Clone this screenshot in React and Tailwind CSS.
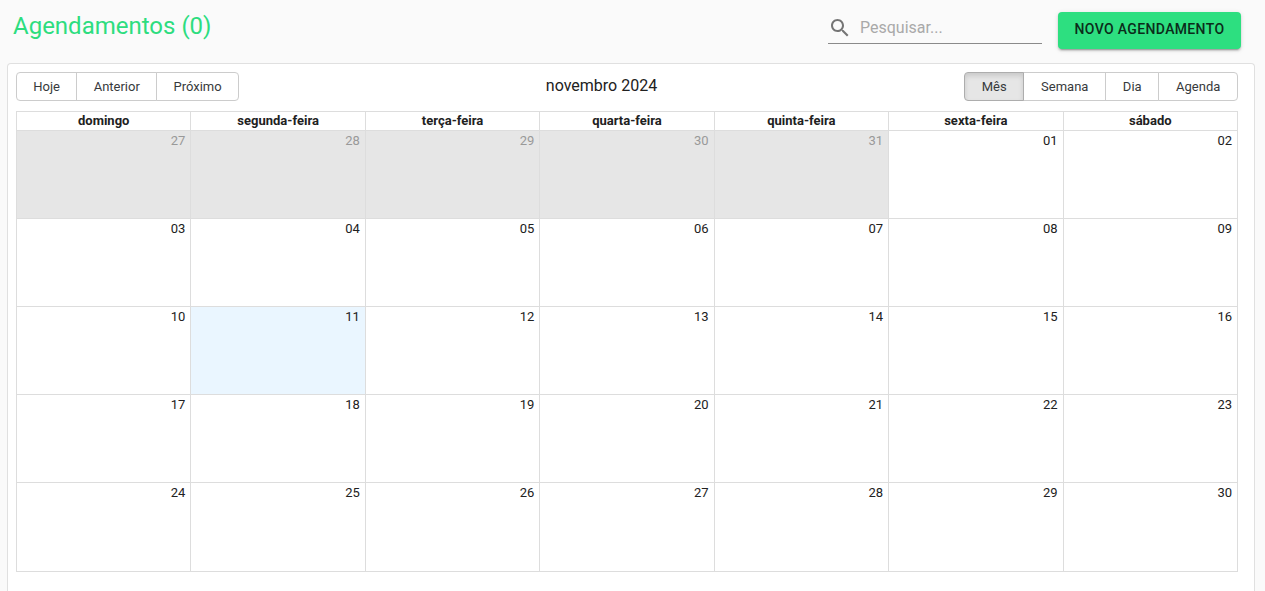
import React, { useState } from "react";

const WEEKDAYS = [
  "domingo",
  "segunda-feira",
  "terça-feira",
  "quarta-feira",
  "quinta-feira",
  "sexta-feira",
  "sábado",
];

const FIRST_DAY = new Date(2024, 9, 27);
const WEEKS = Array.from({ length: 5 }, (_, week) =>
  Array.from({ length: 7 }, (_, day) => {
    const date = new Date(FIRST_DAY);
    date.setDate(FIRST_DAY.getDate() + week * 7 + day);
    return {
      label: String(date.getDate()).padStart(2, "0"),
      offRange: date.getMonth() !== 10,
      today: date.getMonth() === 10 && date.getDate() === 11,
    };
  })
);

const VIEWS = ["Mês", "Semana", "Dia", "Agenda"];

function ToolbarButton({ active, children, ...props }) {
  return (
    <button
      type="button"
      className={
        "-ml-px h-[29px] flex-auto border px-4 text-[13px] leading-4 text-[#373a3c] first:ml-0 first:rounded-l last:rounded-r " +
        (active
          ? "z-10 border-[#adadad] bg-[#e6e6e6] shadow-[inset_0_3px_5px_rgba(0,0,0,0.125)]"
          : "border-[#cccccc] bg-white hover:bg-[#e6e6e6]")
      }
      {...props}
    >
      {children}
    </button>
  );
}

function dayClass(day) {
  if (day.offRange) return "bg-[#e6e6e6] text-[#999999]";
  if (day.today) return "bg-[#eaf6ff]";
  return "";
}

export default function App() {
  const [view, setView] = useState("Mês");

  return (
    <div className="flex min-h-screen flex-col bg-[#fafafa] pr-[10px] pl-[7px] font-['Roboto',sans-serif] text-[#212121]">
      <header className="flex items-start justify-between pt-3 pr-[14px] pb-[13px] pl-[6px]">
        <h1 className="text-2xl leading-7 text-[#2ddd7f]">Agendamentos (0)</h1>
        <div className="flex items-start gap-4">
          <label className="flex h-8 w-[214px] items-center gap-2 border-b border-[#8a8a8a]">
            <svg
              className="size-6 shrink-0 fill-[#757575]"
              viewBox="0 0 24 24"
              aria-hidden="true"
            >
              <path d="M15.5 14h-.79l-.28-.27C15.41 12.59 16 11.11 16 9.5 16 5.91 13.09 3 9.5 3S3 5.91 3 9.5 5.91 16 9.5 16c1.61 0 3.09-.59 4.23-1.57l.27.28v.79l5 4.99L20.49 19l-4.99-5zm-6 0C7.01 14 5 11.99 5 9.5S7.01 5 9.5 5 14 7.01 14 9.5 11.99 14 9.5 14z" />
            </svg>
            <input
              type="search"
              aria-label="Pesquisar"
              placeholder="Pesquisar..."
              className="w-full min-w-0 bg-transparent text-base leading-5 outline-none placeholder:text-[#a9a9a9]"
            />
          </label>
          <button
            type="button"
            className="min-w-[183px] rounded bg-[#2ddf80] px-4 pt-[5px] pb-2 text-sm leading-6 font-medium tracking-wide text-[#0b2c1a] uppercase shadow-[0_3px_1px_-2px_rgba(0,0,0,0.2),0_2px_2px_0_rgba(0,0,0,0.14),0_1px_5px_0_rgba(0,0,0,0.12)]"
          >
            Novo Agendamento
          </button>
        </div>
      </header>

      <main className="mt-px flex-1 rounded-t border border-b-0 border-[#e0e0e0] bg-white pt-2 pr-4 pb-4 pl-2">
        <div className="mb-[10px] flex items-start">
          <div className="flex min-w-[223px]">
            <ToolbarButton>Hoje</ToolbarButton>
            <ToolbarButton>Anterior</ToolbarButton>
            <ToolbarButton>Próximo</ToolbarButton>
          </div>
          <h2 className="flex-1 text-center text-base leading-[27px]">novembro 2024</h2>
          <div className="flex min-w-[274px]">
            {VIEWS.map((name) => (
              <ToolbarButton
                key={name}
                active={view === name}
                aria-pressed={view === name}
                onClick={() => setView(name)}
              >
                {name}
              </ToolbarButton>
            ))}
          </div>
        </div>

        <table className="w-full table-fixed border-collapse border border-[#dddddd]">
          <thead>
            <tr className="h-[19px]">
              {WEEKDAYS.map((name) => (
                <th
                  key={name}
                  scope="col"
                  className="border border-[#dddddd] p-0 text-[13px] leading-[18px] font-bold"
                >
                  {name}
                </th>
              ))}
            </tr>
          </thead>
          <tbody>
            {WEEKS.map((week, index) => (
              <tr key={index} className="h-[88px] last:h-[89px]">
                {week.map((day) => (
                  <td
                    key={day.label}
                    className={
                      "border border-[#dddddd] pt-0 pr-[5px] text-right align-top text-[13px] leading-[19px] " +
                      dayClass(day)
                    }
                  >
                    {day.label}
                  </td>
                ))}
              </tr>
            ))}
          </tbody>
        </table>
      </main>
    </div>
  );
}
